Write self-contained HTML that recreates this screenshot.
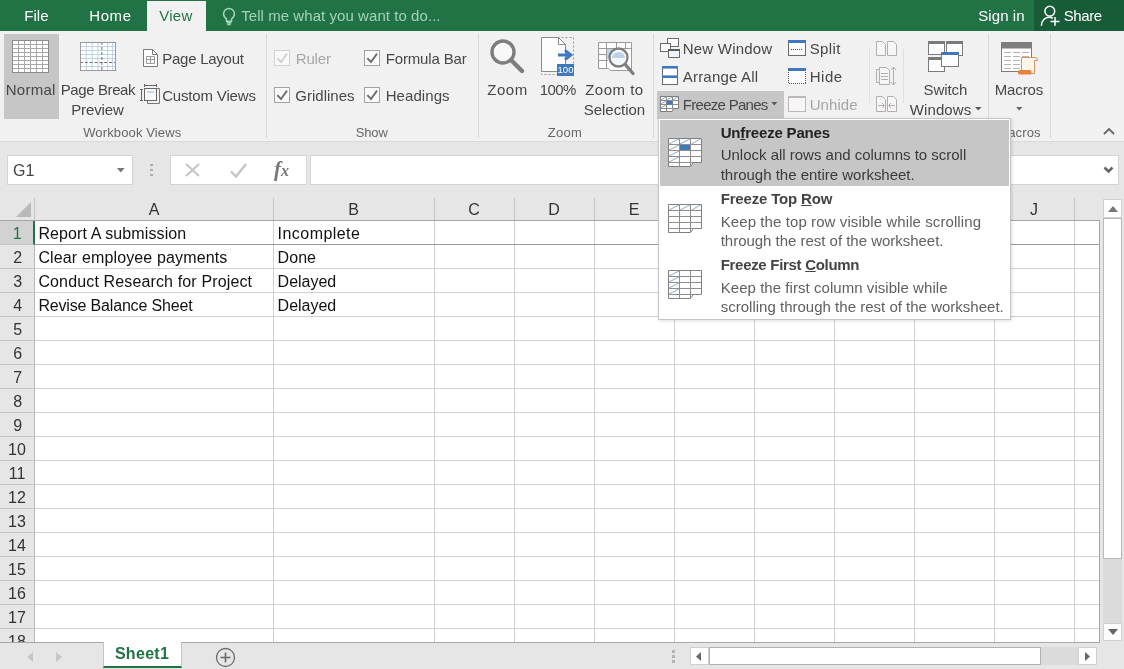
<!DOCTYPE html>
<html lang="en">
<head>
<meta charset="utf-8">
<title>Excel - Freeze Panes</title>
<style>
html,body{margin:0;padding:0;}
body{width:1124px;height:669px;overflow:hidden;position:relative;background:#e6e6e6;font-family:"Liberation Sans",sans-serif;color:#444;font-size:15px;}
.abs{position:absolute;}
.t{position:absolute;white-space:nowrap;line-height:20px;}
#titlebar{left:0;top:0;width:1124px;height:31px;background:#217346;z-index:2;}
#titlebar .t{color:#fff;font-size:15px;top:6px;}
#viewtab{left:147px;top:1px;width:59px;height:30px;background:#f1f1f1;}
#share{left:1034px;top:0;width:90px;height:31px;background:#185c37;}
#ribbon{left:0;top:30px;width:1124px;height:111px;background:#f1f1f1;border-bottom:1px solid #dadada;}
#ribbon .t{color:#474747;font-size:15px;}
#ribbon .g{color:#666;font-size:13px;}
#ribbon .dis{color:#a6a6a6;}
.sep{position:absolute;top:12px;width:1px;height:94px;background:#d8d8d8;}
.cb{position:absolute;width:14px;height:14px;border:1px solid #a3a3a3;background:#fafafa;}
.cb.d{border-color:#d2d2d2;}
#fbar{left:0;top:142px;width:1124px;height:56px;background:#e6e6e6;}
.box{position:absolute;background:#fff;border:1px solid #d4d4d4;box-sizing:border-box;}
#grid{left:0;top:198px;width:1100px;height:444px;background:#fff;overflow:hidden;}
#colhdr{left:0;top:0;width:1100px;height:22px;background:#e6e6e6;border-bottom:1px solid #a6a6a6;}
#colhdr .t{font-size:16px;color:#333;top:1px;line-height:22px;text-align:center;}
#rowhdr{left:0;top:23px;width:35px;height:421px;background:#e6e6e6;border-right:1px solid #b9b9b9;box-sizing:border-box;}
.rh{position:absolute;left:0;width:34px;height:23px;border-bottom:1px solid #c6c6c6;text-align:center;font-size:16px;line-height:26px;color:#333;}
.vl{position:absolute;top:0;width:1px;height:444px;background:#d0d0d0;}
.hl{position:absolute;left:35px;width:1065px;height:1px;background:#d0d0d0;}
.cell{position:absolute;font-size:16px;color:#111;line-height:26px;white-space:nowrap;}
#bottombar{left:0;top:642px;width:1124px;height:27px;background:#e6e6e6;}
#vscroll{left:1100px;top:198px;width:24px;height:444px;background:#e6e6e6;}
#menu{left:658px;top:118px;width:353px;height:202px;background:#fff;border:1px solid #c6c6c6;box-sizing:border-box;box-shadow:1px 1px 3px rgba(0,0,0,.14);}
#menu .hd{font-weight:bold;font-size:15px;color:#444;}
#menu .ds{font-size:15px;color:#606060;}
</style>
</head>
<body>
<div id="root" style="position:absolute;left:0;top:0;width:1124px;height:669px;will-change:transform;">

<!-- ===== TITLE / TAB BAR ===== -->
<div id="titlebar" class="abs">
  <div id="viewtab" class="abs"></div>
  <div id="share" class="abs"></div>
  <svg class="abs" style="left:221px;top:6px;" width="16" height="20" viewBox="0 0 16 20">
    <path d="M5.400 12.800C3.600 11.600 2.600 9.800 2.600 7.800A5.400 5.400 0 0 1 13.400 7.800C13.400 9.800 12.400 11.600 10.600 12.800V15.300H5.400Z" fill="none" stroke="#a3d3b8" stroke-width="1.500" stroke-linejoin="round"/>
    <path d="M5.600 16.700H10.400M6.200 18.500H9.800" stroke="#a3d3b8" stroke-width="1.400" fill="none"/>
  </svg>
  <svg class="abs" style="left:1040px;top:4px;" width="22" height="24" viewBox="0 0 22 24">
    <circle cx="9.800" cy="7.200" r="4.900" fill="none" stroke="#fff" stroke-width="1.500"/>
    <path d="M1.400 21.800C1.600 16.500 5 13.300 9 13.300C10.500 13.300 11.700 13.600 12.800 14.300" fill="none" stroke="#fff" stroke-width="1.500"/>
    <path d="M10.500 17.400H19.500M15 13V21.800" stroke="#fff" stroke-width="1.500" fill="none"/>
  </svg>
  <span class="t" style="left:24.2px;letter-spacing:0.08px;">File</span>
  <span class="t" style="left:89.2px;letter-spacing:0.62px;">Home</span>
  <span class="t" style="left:159.2px;color:#217346;letter-spacing:0.31px;">View</span>
  <span class="t" style="left:241.2px;color:#a3d2b8;letter-spacing:0.06px;">Tell me what you want to do...</span>
  <span class="t" style="left:978.2px;letter-spacing:0.09px;">Sign in</span>
  <span class="t" style="left:1063.7px;letter-spacing:-0.41px;">Share</span>
</div>

<!-- ===== RIBBON ===== -->
<div id="ribbon" class="abs">
  <!-- Workbook Views -->
  <div class="abs" style="left:4px;top:4px;width:55px;height:85px;background:#c6c6c6;"></div>
  <svg class="abs" style="left:12px;top:10px;" width="37" height="33" viewBox="0 0 37 33">
    <rect x="0.5" y="0.5" width="36" height="32" fill="#fff" stroke="#8c8c8c"/>
    <g stroke="#a8a8a8" stroke-width="1" fill="none">
      <path d="M0 4.5H37M0 8.5H37M0 12.5H37M0 16.5H37M0 20.5H37M0 24.5H37M0 28.5H37"/>
      <path d="M6.5 0V33M12.5 0V33M18.5 0V33M24.5 0V33M30.5 0V33"/>
    </g>
    <rect x="0.5" y="0.5" width="36" height="32" fill="none" stroke="#8c8c8c"/>
  </svg>
  <span class="t" style="left:5.7px;top:50px;letter-spacing:0.28px;">Normal</span>

  <svg class="abs" style="left:80px;top:12px;" width="36" height="29" viewBox="0 0 37 29" preserveAspectRatio="none">
    <rect x="0.5" y="0.5" width="36" height="28" fill="#fff" stroke="#9a9a9a"/>
    <g stroke="#bdd0e6" stroke-width="1" fill="none">
      <path d="M0 4.5H37M0 8.5H37M0 12.5H37M0 16.5H37M0 24.5H37"/>
      <path d="M6.5 0V29M12.5 0V29M18.5 0V29M28.5 0V29M33.5 0V29"/>
    </g>
    <path d="M22.5 0V29" stroke="#6a6a6a" stroke-width="1" stroke-dasharray="3 2" fill="none"/>
    <path d="M0 20.5H37" stroke="#6a6a6a" stroke-width="1" stroke-dasharray="3 2" fill="none"/>
    <rect x="0.5" y="0.5" width="36" height="28" fill="none" stroke="#9a9a9a"/>
  </svg>
  <span class="t" style="left:60.7px;top:50px;letter-spacing:-0.39px;">Page Break</span>
  <span class="t" style="left:71.2px;top:70px;letter-spacing:-0.12px;">Preview</span>

  <svg class="abs" style="left:143px;top:19px;" width="15" height="18" viewBox="0 0 15 18">
    <path d="M0.5 0.5H9.5L14.5 5.5V17.5H0.5Z" fill="#fdfdfd" stroke="#7a7a7a"/>
    <path d="M9.5 0.5V5.5H14.5" fill="none" stroke="#7a7a7a"/>
    <path d="M3.5 7.5H11.5V14.5H3.5ZM3.5 10.5H11.5M7.5 7.5V14.5" fill="none" stroke="#9a9a9a"/>
  </svg>
  <span class="t" style="left:162.2px;top:19px;letter-spacing:-0.25px;">Page Layout</span>

  <svg class="abs" style="left:140px;top:54px;" width="21" height="20" viewBox="0 0 21 20">
    <path d="M1.500 5V17M0 5.500H3M0 16.500H3" fill="none" stroke="#666"/>
    <path d="M4 1.500H17M4.500 0V3M16.500 0V3" fill="none" stroke="#666"/>
    <path d="M17 4.500H19.500V19.500H7.500V17" fill="none" stroke="#777"/>
    <rect x="4.500" y="4.500" width="12" height="12" fill="#fafafa" stroke="#666"/>
    <path d="M7 8H14" stroke="#b5cbe6" stroke-width="1.500"/>
  </svg>
  <span class="t" style="left:162.2px;top:56px;letter-spacing:-0.17px;">Custom Views</span>
  <span class="t g" style="left:83.2px;top:93px;letter-spacing:0.13px;">Workbook Views</span>
  <div class="sep" style="left:266px;top:4px;height:104px;"></div>

  <!-- Show -->
  <div class="cb d" style="left:274px;top:20px;"></div>
  <svg class="abs" style="left:274px;top:20px;" width="16" height="16" viewBox="0 0 16 16"><path d="M3.300 8.200L7 12L13 3.600" fill="none" stroke="#cfcfcf" stroke-width="1.900"/></svg>
  <span class="t dis" style="left:295.8px;top:19px;letter-spacing:-0.19px;">Ruler</span>
  <div class="cb" style="left:274px;top:57px;"></div>
  <svg class="abs" style="left:274px;top:57px;" width="16" height="16" viewBox="0 0 16 16"><path d="M3.300 8.200L7 12L13 3.600" fill="none" stroke="#6e6e6e" stroke-width="1.900"/></svg>
  <span class="t" style="left:295.2px;top:56px;letter-spacing:0.03px;">Gridlines</span>
  <div class="cb" style="left:364px;top:20px;"></div>
  <svg class="abs" style="left:364px;top:20px;" width="16" height="16" viewBox="0 0 16 16"><path d="M3.300 8.200L7 12L13 3.600" fill="none" stroke="#6e6e6e" stroke-width="1.900"/></svg>
  <span class="t" style="left:385.7px;top:19px;letter-spacing:-0.14px;">Formula Bar</span>
  <div class="cb" style="left:364px;top:57px;"></div>
  <svg class="abs" style="left:364px;top:57px;" width="16" height="16" viewBox="0 0 16 16"><path d="M3.300 8.200L7 12L13 3.600" fill="none" stroke="#6e6e6e" stroke-width="1.900"/></svg>
  <span class="t" style="left:385.7px;top:56px;letter-spacing:0.08px;">Headings</span>
  <span class="t g" style="left:355.7px;top:93px;letter-spacing:-0.13px;">Show</span>
  <div class="sep" style="left:478px;top:4px;height:104px;"></div>

  <!-- Zoom -->
  <svg class="abs" style="left:488.500px;top:7.500px;" width="37" height="36" viewBox="0 0 37 36">
    <circle cx="14" cy="14" r="11" fill="#f8f8f8" stroke="#7d7d7d" stroke-width="3.400"/>
    <path d="M22 22L33 33" stroke="#7d7d7d" stroke-width="4.400" stroke-linecap="round"/>
  </svg>
  <span class="t" style="left:487.2px;top:50px;letter-spacing:0.54px;">Zoom</span>

  <svg class="abs" style="left:540px;top:6px;" width="36" height="41" viewBox="0 0 36 41">
    <rect x="1.500" y="1.500" width="32" height="37" fill="none" stroke="#9a9a9a" stroke-dasharray="2 2"/>
    <path d="M1.500 1.500H18.500L25.500 8.500V35.500H1.500Z" fill="#fdfdfd" stroke="#8a8a8a"/>
    <path d="M18.500 1.500V8.500H25.500" fill="none" stroke="#8a8a8a"/>
    <path d="M18 19H29M25 14.300L31 19L25 23.700" fill="none" stroke="#3f78bd" stroke-width="2.800"/>
    <rect x="17" y="28" width="17" height="12" fill="#3f78bd"/>
    <text x="25.500" y="37.300" font-family="Liberation Sans, sans-serif" font-size="9.500" fill="#fff" text-anchor="middle">100</text>
  </svg>
  <span class="t" style="left:539.8px;top:50px;letter-spacing:-0.62px;">100%</span>

  <svg class="abs" style="left:598px;top:12px;" width="38" height="36" viewBox="0 0 38 36">
    <path d="M0.500 0.500H33.500V28.500H12.500L10.500 26.500H0.500Z" fill="#fdfdfd" stroke="#9a9a9a"/>
    <path d="M0 6.500H34M0 12.500H10M0 18.500H10M8.500 0V27M18.500 0V7M27.500 0V7" stroke="#9a9a9a" fill="none"/>
    <rect x="9" y="7" width="16" height="10" fill="#c3d5ec"/>
    <circle cx="20.500" cy="15.500" r="9" fill="#f4f7fb" stroke="#7d7d7d" stroke-width="2.300"/>
    <path d="M13.800 16A6.800 6.800 0 0 1 27.200 16Z" fill="#bcd0ea"/>
    <path d="M27.300 22.500L35 31.500" stroke="#7d7d7d" stroke-width="3.300" stroke-linecap="round"/>
  </svg>
  <span class="t" style="left:585.2px;top:50px;letter-spacing:0.50px;">Zoom to</span>
  <span class="t" style="left:583.8px;top:70px;letter-spacing:-0.04px;">Selection</span>
  <span class="t g" style="left:547.7px;top:93px;letter-spacing:0.34px;">Zoom</span>
  <div class="sep" style="left:653px;top:4px;height:104px;"></div>

  <!-- Window -->
  <svg class="abs" style="left:660px;top:8px;" width="21" height="20" viewBox="0 0 21 20">
    <rect x="7.500" y="0.500" width="11" height="8" fill="#fdfdfd" stroke="#6a6a6a"/>
    <rect x="0.500" y="5.500" width="10" height="8" fill="#fdfdfd" stroke="#6a6a6a"/>
    <rect x="8.500" y="11.500" width="11" height="8" fill="#eef3fa" stroke="#6a6a6a"/>
    <path d="M8 12H20" stroke="#5a5a5a" stroke-width="2"/>
  </svg>
  <span class="t" style="left:682.8px;top:9px;letter-spacing:0.20px;">New Window</span>
  <svg class="abs" style="left:662px;top:36px;" width="16" height="19" viewBox="0 0 16 19">
    <rect x="0.500" y="0.500" width="15" height="18" fill="#fdfdfd" stroke="#6a6a6a"/>
    <rect x="0" y="0" width="16" height="2.600" fill="#3f78bd"/>
    <rect x="0" y="9.400" width="16" height="2.600" fill="#3f78bd"/>
  </svg>
  <span class="t" style="left:682.8px;top:37px;letter-spacing:0.19px;">Arrange All</span>
  <div class="abs" style="left:657px;top:61px;width:127px;height:28px;background:#c6c6c6;"></div>
  <svg class="abs" style="left:660px;top:66px;" width="20" height="16" viewBox="0 0 20 16">
    <path d="M0.500 0.500H18.500V12.500H13.500L12 15.500H0.500Z" fill="#fdfdfd" stroke="#7a7a7a"/>
    <path d="M0 4.500H19M0 8.500H19M0 12.500H14M6.500 0V16M12.500 0V13" stroke="#8a8a8a" fill="none"/>
    <path d="M1 4L6 1M7 4L12 1M13 4L18 1M1 8L6 5M1 12L6 9" stroke="#8fabd0" fill="none"/>
    <rect x="7" y="5" width="5.500" height="3.500" fill="#3f78bd"/>
  </svg>
  <span class="t" style="left:682.8px;top:65px;letter-spacing:-0.71px;">Freeze Panes</span>
  <svg class="abs" style="left:771px;top:72px;" width="7" height="4" viewBox="0 0 7 4"><path d="M0.300 0H6.300L3.300 3.500Z" fill="#5c5c5c"/></svg>

  <svg class="abs" style="left:788px;top:10px;" width="18" height="16" viewBox="0 0 18 16">
    <rect x="0.500" y="0.500" width="17" height="15" fill="#fdfdfd" stroke="#6a6a6a"/>
    <rect x="0" y="0" width="18" height="3" fill="#3f78bd"/>
    <path d="M3 9.500H15" stroke="#555" stroke-dasharray="1 1" shape-rendering="crispEdges"/>
  </svg>
  <span class="t" style="left:809.7px;top:9px;letter-spacing:0.36px;">Split</span>
  <svg class="abs" style="left:788px;top:38px;" width="18" height="16" viewBox="0 0 18 16">
    <rect x="0.500" y="0.500" width="17" height="15" fill="#fdfdfd" stroke="#555" stroke-dasharray="1 1" shape-rendering="crispEdges"/>
    <rect x="0" y="0" width="18" height="3" fill="#3f78bd"/>
  </svg>
  <span class="t" style="left:809.7px;top:37px;letter-spacing:0.54px;">Hide</span>
  <svg class="abs" style="left:788px;top:66px;" width="18" height="16" viewBox="0 0 18 16">
    <rect x="0.500" y="0.500" width="17" height="15" fill="#f8f4f8" stroke="#b9b9b9"/>
    <rect x="0" y="0" width="18" height="2" fill="#b9b9b9"/>
  </svg>
  <span class="t dis" style="left:809.7px;top:65px;letter-spacing:0.08px;">Unhide</span>
  <div class="sep" style="left:869px;top:18px;height:55px;background:#e0e0e0;"></div>

  <svg class="abs" style="left:876px;top:11px;" width="21" height="15" viewBox="0 0 21 15">
    <path d="M0.500 0.500H6.500L9.500 3.500V14.500H0.500Z" fill="#f6f6f6" stroke="#b3acb3"/>
    <path d="M11.500 0.500H17.500L20.500 3.500V14.500H11.500Z" fill="#f6f6f6" stroke="#b3acb3"/>
  </svg>
  <svg class="abs" style="left:876px;top:36px;" width="21" height="20" viewBox="0 0 21 20">
    <path d="M0.500 3.500H3.500M0.500 3.500V16.500H3.500" fill="none" stroke="#b3acb3"/>
    <path d="M3.500 1.500H10.500L13.500 4.500V18.500H3.500Z" fill="#f6f6f6" stroke="#b3acb3"/>
    <path d="M5 7.500H12M5 10.500H12M5 13.500H12" stroke="#b3acb3"/>
    <path d="M17.500 1V19M15 4L17.500 1L20 4M15 16L17.500 19L20 16" fill="none" stroke="#b3acb3"/>
  </svg>
  <svg class="abs" style="left:876px;top:66px;" width="21" height="16" viewBox="0 0 21 16">
    <path d="M0.500 0.500H6.500L9.500 3.500V15.500H0.500Z" fill="#f6f6f6" stroke="#b3acb3"/>
    <path d="M11.500 0.500H17.500L20.500 3.500V15.500H11.500Z" fill="#f6f6f6" stroke="#b3acb3"/>
    <path d="M2 9.500H8M6 7L8.500 9.500L6 12M19 9.500H13M15 7L12.500 9.500L15 12" fill="none" stroke="#b3acb3"/>
  </svg>
  <div class="sep" style="left:903px;top:18px;height:55px;background:#e0e0e0;"></div>

  <svg class="abs" style="left:928px;top:11px;" width="36" height="32" viewBox="0 0 36 32">
    <rect x="0.500" y="0.500" width="16" height="13" fill="#fdfdfd" stroke="#7a7a7a"/>
    <rect x="0" y="0" width="17" height="3" fill="#7a7a7a"/>
    <rect x="18.500" y="0.500" width="16" height="14" fill="#fdfdfd" stroke="#7a7a7a"/>
    <rect x="18" y="0" width="17" height="3" fill="#7a7a7a"/>
    <rect x="0.500" y="16.500" width="16" height="14" fill="#fdfdfd" stroke="#7a7a7a"/>
    <rect x="0" y="16" width="17" height="3" fill="#7a7a7a"/>
    <rect x="13.500" y="11.500" width="17" height="14" fill="#fdfdfd" stroke="#7a7a7a"/>
    <rect x="13" y="11" width="18" height="3" fill="#3f78bd"/>
  </svg>
  <span class="t" style="left:923.6px;top:50px;letter-spacing:-0.10px;">Switch</span>
  <span class="t" style="left:909.7px;top:70px;letter-spacing:0.12px;">Windows</span>
  <svg class="abs" style="left:975px;top:77px;" width="7" height="4" viewBox="0 0 7 4"><path d="M0 0H6.600L3.300 3.600Z" fill="#5c5c5c"/></svg>
  <div class="sep" style="left:988px;top:4px;height:104px;"></div>

  <!-- Macros -->
  <svg class="abs" style="left:1001px;top:12px;" width="38" height="34" viewBox="0 0 38 34">
    <rect x="0.500" y="0.500" width="30" height="29" fill="#fdfdfd" stroke="#7d7d7d"/>
    <rect x="0" y="0" width="31" height="6.500" fill="#7d7d7d"/>
    <path d="M3 10.500H28M3 14.500H28M3 18.500H28M3 22.500H28M3 26.500H28" stroke="#b4b4b4" stroke-dasharray="7 2"/>
    <path d="M20.500 15.500H34Q36.500 15.500 36.500 18.500H33.500V31.500H20.500Z" fill="#fdf6ec" stroke="#dd9257"/>
    <rect x="17" y="28" width="13.500" height="4.600" rx="1.500" fill="#e8833a"/>
  </svg>
  <span class="t" style="left:994.7px;top:50px;letter-spacing:-0.10px;">Macros</span>
  <svg class="abs" style="left:1016px;top:77px;" width="7" height="4" viewBox="0 0 7 4"><path d="M0 0H6.500L3.250 3.500Z" fill="#666"/></svg>
  <span class="t g" style="left:997.2px;top:93px;letter-spacing:0.15px;">Macros</span>
  <div class="sep" style="left:1050px;top:4px;height:104px;"></div>
  <svg class="abs" style="left:1103px;top:97px;" width="12" height="8" viewBox="0 0 12 8"><path d="M1 7L6 2L11 7" fill="none" stroke="#666" stroke-width="1.800"/></svg>
</div>

<!-- ===== FORMULA BAR ===== -->
<div id="fbar" class="abs">
  <div class="box" style="left:7px;top:13px;width:126px;height:30px;"></div>
  <span class="t" style="left:13px;top:19px;font-size:16px;color:#444;">G1</span>
  <svg class="abs" style="left:116.500px;top:25.500px;" width="8" height="5" viewBox="0 0 8 5"><path d="M0 0H7.600L3.800 4.500Z" fill="#777"/></svg>
  <div class="abs" style="left:150px;top:21.500px;width:3px;height:2.500px;background:#ababab;box-shadow:0 5px 0 #ababab,0 10px 0 #ababab;"></div>
  <div class="box" style="left:170px;top:13px;width:137px;height:30px;"></div>
  <svg class="abs" style="left:185px;top:21px;" width="15" height="14" viewBox="0 0 15 14"><path d="M1 1L14 13M14 1L1 13" stroke="#c4c4c4" stroke-width="2" fill="none"/></svg>
  <svg class="abs" style="left:230px;top:20.500px;" width="17" height="15" viewBox="0 0 17 15"><path d="M1 8.500L6 13.500L16 1" stroke="#c4c4c4" stroke-width="2.400" fill="none"/></svg>
  <span class="t" style="left:274px;top:17px;font-family:'Liberation Serif',serif;font-style:italic;font-weight:bold;font-size:21px;color:#777;">f<span style="font-size:16px;">x</span></span>
  <div class="box" style="left:310px;top:13px;width:809px;height:30px;"></div>
  <svg class="abs" style="left:1103px;top:24px;" width="11" height="8" viewBox="0 0 11 8"><path d="M1.500 1.500L5.500 5.500L9.500 1.500" fill="none" stroke="#666" stroke-width="2.500"/></svg>
</div>

<!-- ===== GRID ===== -->
<div id="grid" class="abs">
  <div class="vl" style="left:273px;"></div>
  <div class="vl" style="left:434px;"></div>
  <div class="vl" style="left:514px;"></div>
  <div class="vl" style="left:594px;"></div>
  <div class="vl" style="left:674px;"></div>
  <div class="vl" style="left:754px;"></div>
  <div class="vl" style="left:834px;"></div>
  <div class="vl" style="left:914px;"></div>
  <div class="vl" style="left:994px;"></div>
  <div class="vl" style="left:1074px;"></div>
  <div class="hl" style="top:46px;"></div>
  <div class="hl" style="top:70px;"></div>
  <div class="hl" style="top:94px;"></div>
  <div class="hl" style="top:118px;"></div>
  <div class="hl" style="top:142px;"></div>
  <div class="hl" style="top:166px;"></div>
  <div class="hl" style="top:190px;"></div>
  <div class="hl" style="top:214px;"></div>
  <div class="hl" style="top:238px;"></div>
  <div class="hl" style="top:262px;"></div>
  <div class="hl" style="top:286px;"></div>
  <div class="hl" style="top:310px;"></div>
  <div class="hl" style="top:334px;"></div>
  <div class="hl" style="top:358px;"></div>
  <div class="hl" style="top:382px;"></div>
  <div class="hl" style="top:406px;"></div>
  <div class="hl" style="top:430px;"></div>
  <div class="hl" style="top:454px;"></div>
  <div class="hl" style="top:46px;background:#9b9b9b;"></div>
  <div id="colhdr" class="abs">
    <span class="t" style="left:35px;width:238px;">A</span>
    <div class="abs" style="left:273px;top:0;width:1px;height:22px;background:#c6c6c6;"></div>
    <span class="t" style="left:273px;width:161px;">B</span>
    <div class="abs" style="left:434px;top:0;width:1px;height:22px;background:#c6c6c6;"></div>
    <span class="t" style="left:434px;width:80px;">C</span>
    <div class="abs" style="left:514px;top:0;width:1px;height:22px;background:#c6c6c6;"></div>
    <span class="t" style="left:514px;width:80px;">D</span>
    <div class="abs" style="left:594px;top:0;width:1px;height:22px;background:#c6c6c6;"></div>
    <span class="t" style="left:594px;width:80px;">E</span>
    <div class="abs" style="left:674px;top:0;width:1px;height:22px;background:#c6c6c6;"></div>
    <span class="t" style="left:674px;width:80px;">F</span>
    <div class="abs" style="left:754px;top:0;width:1px;height:22px;background:#c6c6c6;"></div>
    <span class="t" style="left:754px;width:80px;">G</span>
    <div class="abs" style="left:834px;top:0;width:1px;height:22px;background:#c6c6c6;"></div>
    <span class="t" style="left:834px;width:80px;">H</span>
    <div class="abs" style="left:914px;top:0;width:1px;height:22px;background:#c6c6c6;"></div>
    <span class="t" style="left:914px;width:80px;">I</span>
    <div class="abs" style="left:994px;top:0;width:1px;height:22px;background:#c6c6c6;"></div>
    <span class="t" style="left:994px;width:80px;">J</span>
    <div class="abs" style="left:1074px;top:0;width:1px;height:22px;background:#c6c6c6;"></div>
    <div class="abs" style="left:34px;top:0;width:1px;height:22px;background:#c6c6c6;"></div>
    <svg class="abs" style="left:16px;top:3.500px;" width="15" height="15" viewBox="0 0 15 15"><path d="M15 0V15H0Z" fill="#b9b9b9"/></svg>
  </div>
  <div id="rowhdr" class="abs">
    <div class="rh" style="top:0px;background:#d2d2d2;color:#217346;border-right:2px solid #217346;width:33px;text-indent:1.500px;">1</div>
    <div class="rh" style="top:24px;text-indent:1.500px;">2</div>
    <div class="rh" style="top:48px;text-indent:1.500px;">3</div>
    <div class="rh" style="top:72px;text-indent:1.500px;">4</div>
    <div class="rh" style="top:96px;text-indent:1.500px;">5</div>
    <div class="rh" style="top:120px;text-indent:1.500px;">6</div>
    <div class="rh" style="top:144px;text-indent:1.500px;">7</div>
    <div class="rh" style="top:168px;text-indent:1.500px;">8</div>
    <div class="rh" style="top:192px;text-indent:1.500px;">9</div>
    <div class="rh" style="top:216px;">10</div>
    <div class="rh" style="top:240px;">11</div>
    <div class="rh" style="top:264px;">12</div>
    <div class="rh" style="top:288px;">13</div>
    <div class="rh" style="top:312px;">14</div>
    <div class="rh" style="top:336px;">15</div>
    <div class="rh" style="top:360px;">16</div>
    <div class="rh" style="top:384px;">17</div>
    <div class="rh" style="top:408px;">18</div>
  </div>
  <span class="cell" style="left:38.4px;top:23px;letter-spacing:0.11px;">Report A submission</span>
  <span class="cell" style="left:277.6px;top:23px;letter-spacing:0.45px;">Incomplete</span>
  <span class="cell" style="left:38.4px;top:47px;letter-spacing:0.14px;">Clear employee payments</span>
  <span class="cell" style="left:277.6px;top:47px;letter-spacing:0.04px;">Done</span>
  <span class="cell" style="left:38.4px;top:71px;letter-spacing:0.14px;">Conduct Research for Project</span>
  <span class="cell" style="left:277.6px;top:71px;letter-spacing:-0.01px;">Delayed</span>
  <span class="cell" style="left:38.4px;top:95px;letter-spacing:-0.17px;">Revise Balance Sheet</span>
  <span class="cell" style="left:277.6px;top:95px;letter-spacing:-0.01px;">Delayed</span>
  <div class="abs" style="left:1099px;top:22px;width:1px;height:422px;background:#a6a6a6;"></div>
</div>

<!-- ===== VERTICAL SCROLL ===== -->
<div id="vscroll" class="abs">
  <div class="box" style="left:3px;top:1px;width:19px;height:19px;border-color:#d0d0d0;"></div>
  <svg class="abs" style="left:7.500px;top:8px;" width="10" height="6" viewBox="0 0 10 6"><path d="M0 6H10L5 0Z" fill="#777"/></svg>
  <div class="box" style="left:3px;top:20px;width:19px;height:341px;border-color:#b9b9b9;"></div>
  <div class="abs" style="left:3px;top:361px;width:19px;height:64px;background:#dbdbdb;"></div>
  <div class="box" style="left:3px;top:425px;width:19px;height:18px;border-color:#d0d0d0;"></div>
  <svg class="abs" style="left:7.500px;top:431px;" width="10" height="6" viewBox="0 0 10 6"><path d="M0 0H10L5 6Z" fill="#666"/></svg>
</div>

<!-- ===== BOTTOM BAR ===== -->
<div id="bottombar" class="abs">
  <div class="abs" style="left:0;top:0;width:1100px;height:1px;background:#a8a8a8;"></div>
  <svg class="abs" style="left:27px;top:10px;" width="6" height="10" viewBox="0 0 6 10"><path d="M6 0V10L0 5Z" fill="#c6c6c6"/></svg>
  <svg class="abs" style="left:56px;top:10px;" width="6" height="10" viewBox="0 0 6 10"><path d="M0 0V10L6 5Z" fill="#c6c6c6"/></svg>
  <div class="abs" style="left:103px;top:0px;width:77px;height:24px;background:#fff;border-bottom:2px solid #217346;border-left:1px solid #c6c6c6;border-right:1px solid #c6c6c6;box-sizing:content-box;"></div>
  <span class="t" style="left:114.9px;top:2px;font-size:16px;font-weight:bold;color:#217346;letter-spacing:0.31px;">Sheet1</span>
  <svg class="abs" style="left:214.500px;top:4.500px;" width="21" height="21" viewBox="0 0 21 21"><circle cx="10.500" cy="10.500" r="9" fill="none" stroke="#6a6a6a" stroke-width="1.300"/><path d="M5.500 10.500H15.500M10.500 5.500V15.500" stroke="#6a6a6a" stroke-width="1.600"/></svg>
  <div class="abs" style="left:672px;top:8px;width:3px;height:3px;background:#b4b4b4;box-shadow:0 5px 0 #b4b4b4,0 10px 0 #b4b4b4;"></div>
  <div class="box" style="left:690px;top:5px;width:19px;height:18px;border-color:#d0d0d0;"></div>
  <svg class="abs" style="left:696px;top:9.500px;" width="5" height="9" viewBox="0 0 5 9"><path d="M5 0V9L0 4.500Z" fill="#666"/></svg>
  <div class="box" style="left:709px;top:5px;width:332px;height:18px;border-color:#b0b0b0;"></div>
  <div class="abs" style="left:1041px;top:5px;width:38px;height:18px;background:#dbdbdb;"></div>
  <div class="box" style="left:1078px;top:5px;width:19px;height:18px;border-color:#d0d0d0;"></div>
  <svg class="abs" style="left:1085px;top:9.500px;" width="5" height="9" viewBox="0 0 5 9"><path d="M0 0V9L5 4.500Z" fill="#666"/></svg>
</div>

<!-- ===== DROPDOWN MENU ===== -->
<div id="menu" class="abs">
  <div class="abs" style="left:1px;top:1px;width:349px;height:66px;background:#c6c6c6;"></div>
  <svg class="abs" style="left:9px;top:19px;" width="35" height="30" viewBox="0 0 35 30"><path d="M0.500 0.500H33.500V24.500H25.500L22.500 28.500H0.500Z" fill="#fdfdfd" stroke="#808080"/><path d="M0 6.500H34M0 12.500H34M0 18.500H34M0 24.500H26M11.500 0V29M22.500 0V28" stroke="#8e8e8e" fill="none"/><rect x="12" y="7" width="10" height="5" fill="#3f78bd"/><path d="M1 6L11 1M12 6L22 1M23.500 6L32.500 1M1 12L11 7M1 18L11 13M1 24L11 19" stroke="#8fabd0" fill="none"/></svg>
  <span class="t hd" style="left:61.7px;top:4px;color:#222;letter-spacing:-0.18px;">Un<u>f</u>reeze Panes</span>
  <span class="t ds" style="left:61.7px;top:26px;color:#3a3a3a;letter-spacing:-0.01px;">Unlock all rows and columns to scroll</span>
  <span class="t ds" style="left:61.7px;top:46px;color:#3a3a3a;letter-spacing:-0.01px;">through the entire worksheet.</span>
  <svg class="abs" style="left:9px;top:85px;" width="35" height="30" viewBox="0 0 35 30"><path d="M0.500 0.500H33.500V24.500H25.500L22.500 28.500H0.500Z" fill="#fdfdfd" stroke="#808080"/><path d="M0 6.500H34M0 12.500H34M0 18.500H34M0 24.500H26M11.500 0V29M22.500 0V28" stroke="#8e8e8e" fill="none"/><path d="M1 6L11 1M12 6L22 1M23.500 6L32.500 1" stroke="#8fabd0" fill="none"/></svg>
  <span class="t hd" style="left:61.7px;top:70px;letter-spacing:-0.17px;">Freeze Top <u>R</u>ow</span>
  <span class="t ds" style="left:61.7px;top:93px;letter-spacing:0.09px;">Keep the top row visible while scrolling</span>
  <span class="t ds" style="left:61.7px;top:112px;letter-spacing:-0.02px;">through the rest of the worksheet.</span>
  <svg class="abs" style="left:9px;top:151px;" width="35" height="30" viewBox="0 0 35 30"><path d="M0.500 0.500H33.500V24.500H25.500L22.500 28.500H0.500Z" fill="#fdfdfd" stroke="#808080"/><path d="M0 6.500H34M0 12.500H34M0 18.500H34M0 24.500H26M11.500 0V29M22.500 0V28" stroke="#8e8e8e" fill="none"/><path d="M1 6L11 1M1 12L11 7M1 18L11 13M1 24L11 19" stroke="#8fabd0" fill="none"/></svg>
  <span class="t hd" style="left:61.7px;top:136px;letter-spacing:-0.30px;">Freeze First <u>C</u>olumn</span>
  <span class="t ds" style="left:61.7px;top:159px;letter-spacing:0.05px;">Keep the first column visible while</span>
  <span class="t ds" style="left:61.7px;top:178px;letter-spacing:0.01px;">scrolling through the rest of the worksheet.</span>
</div>

</div>
</body>
</html>
